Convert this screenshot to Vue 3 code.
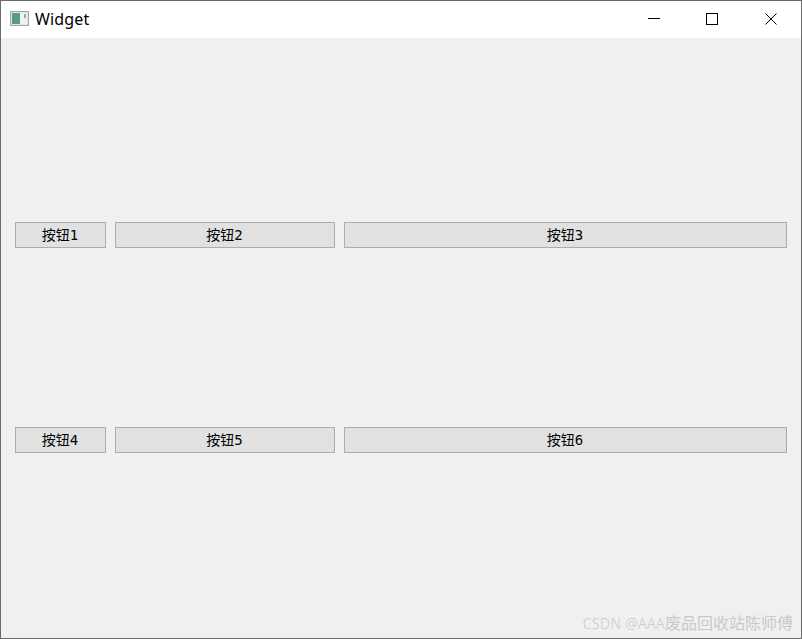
<script setup>
const buttons = ['按钮1', '按钮2', '按钮3', '按钮4', '按钮5', '按钮6']
</script>

<template>
  <div class="window">
    <div class="titlebar">
      <svg class="app-icon" width="20" height="16" viewBox="0 0 20 16">
        <defs>
          <linearGradient id="pane" x1="0" y1="0" x2="0.6" y2="1">
            <stop offset="0" stop-color="#5f8fa8" />
            <stop offset="1" stop-color="#55a070" />
          </linearGradient>
        </defs>
        <rect x="0.5" y="0.5" width="18" height="14" fill="#e4e4e8" stroke="#a4a4a8" />
        <rect x="2" y="2" width="8" height="11" fill="url(#pane)" />
        <rect x="10" y="2" width="7" height="11" fill="#eef2f4" />
        <rect x="14" y="3" width="2" height="4" fill="#7fb0b0" />
      </svg>
      <span class="title">Widget</span>
      <div class="controls">
        <svg width="14" height="14" viewBox="0 0 14 14" class="ctl">
          <path d="M1 6.5H13" stroke="#000" fill="none" />
        </svg>
        <svg width="14" height="14" viewBox="0 0 14 14" class="ctl">
          <rect x="1.5" y="1.5" width="11" height="11" stroke="#000" fill="none" />
        </svg>
        <svg width="14" height="14" viewBox="0 0 14 14" class="ctl close">
          <path d="M1.5 1.5L12.5 12.5M12.5 1.5L1.5 12.5" stroke="#000" fill="none" />
        </svg>
      </div>
    </div>
    <div class="content">
      <button v-for="b in buttons" :key="b" class="btn" type="button"><span class="btn-label">{{ b }}</span></button>
      <div class="watermark"><span class="wm-latin">CSDN @AAA</span><span class="wm-cjk">废品回收站陈师傅</span></div>
    </div>
  </div>
</template>

<style>
html, body {
  margin: 0;
  padding: 0;
}
</style>

<style scoped>
.window {
  width: 802px;
  height: 639px;
  box-sizing: border-box;
  border: 1px solid #6b6b6b;
  display: flex;
  flex-direction: column;
  background: #f0f0f0;
  overflow: hidden;
}
.titlebar {
  height: 37px;
  background: #fff;
  display: flex;
  align-items: center;
  padding-left: 9px;
  padding-bottom: 1px;
  box-sizing: border-box;
  flex-shrink: 0;
}
.app-icon {
  margin-right: 5px;
}
.title {
  font-family: "Noto Sans", "Open Sans", sans-serif;
  font-size: 16px;
  letter-spacing: 0.15px;
  color: #000;
}
.controls {
  margin-left: auto;
  display: flex;
  align-items: center;
  gap: 44px;
  padding-right: 23px;
}
.ctl {
  display: block;
}
.close {
  margin-left: 1px;
}
.content {
  position: relative;
  flex: 1;
  box-sizing: border-box;
  padding: 184px 14px 0;
  display: grid;
  grid-template-columns: 91px 220px 443px;
  grid-template-rows: 26px 26px;
  column-gap: 9px;
  row-gap: 179px;
  align-content: start;
}
.btn {
  box-sizing: border-box;
  margin: 0;
  padding: 0 1px 2px 0;
  background: #e1e1e1;
  border: 1px solid #adadad;
  border-radius: 0;
  font-family: "DejaVu Sans Mono", "Noto Sans CJK SC", monospace;
  font-size: 14px;
  color: #000;
}
.btn-label {
  display: block;
}
.watermark {
  position: absolute;
  right: 8px;
  bottom: 4px;
  display: flex;
  align-items: baseline;
  color: #c9c9c9;
  white-space: nowrap;
}
.wm-latin {
  font-family: "Noto Sans", sans-serif;
  font-size: 14px;
  font-weight: 300;
  letter-spacing: 0.45px;
}
.wm-cjk {
  font-family: "Noto Sans CJK SC", sans-serif;
  font-size: 16px;
}
</style>
